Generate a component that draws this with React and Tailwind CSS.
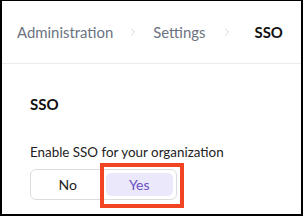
import { ChevronRight } from "lucide-react"

const App = () => {
  return (
    <div className="w-[303px] h-[216px] bg-white border-t border-l-2 border-r-2 border-b-2 border-black overflow-hidden font-['Lato',sans-serif]">
      <div className="h-[63px] flex items-center pl-[15px] border-b border-[#ebebeb] text-[14.9px]">
        <span className="text-[#6b7280]">Administration</span>
        <ChevronRight className="w-[12px] h-[12px] text-[#b9bdc3] mx-[14px]" strokeWidth={1.3} />
        <span className="text-[#6b7280]">Settings</span>
        <ChevronRight className="w-[12px] h-[12px] text-[#b9bdc3] ml-[16px] mr-[21px]" strokeWidth={1.3} />
        <span className="font-bold text-[#111]">SSO</span>
      </div>

      <div className="pl-[28px] pt-[30px]">
        <h2 className="text-[15px] font-bold text-[#111] leading-[20px]">SSO</h2>
        <p className="mt-[29px] text-[13.4px] text-[#222] leading-[18px]">Enable SSO for your organization</p>

        <div className="relative mt-[8px] w-[147px]">
          <div className="flex h-[31px] p-[3px] gap-[4px] border border-[#dcdcdc] rounded-[6px] text-[14px]">
            <button className="flex-1 rounded-[5px] text-[#222]">No</button>
            <button className="flex-1 rounded-[5px] bg-[#ece8fb] text-[#6a4fc4]">Yes</button>
          </div>
          <div className="absolute left-[70px] top-[-6px] w-[84px] h-[45px] border-[4px] border-[#f04423]" />
        </div>
      </div>
    </div>
  )
}

export default App
